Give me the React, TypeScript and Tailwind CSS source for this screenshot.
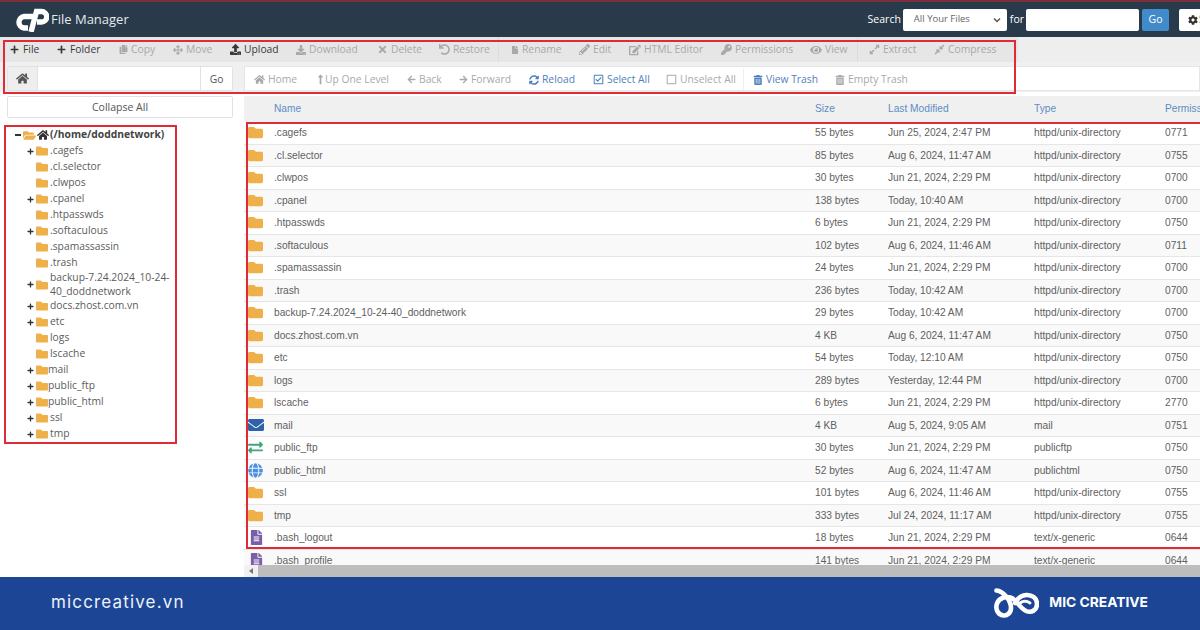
import type { ReactNode } from "react";
import {
  FaArrowLeft,
  FaArrowRight,
  FaArrowsAlt,
  FaCog,
  FaCompressAlt,
  FaCopy,
  FaDownload,
  FaEdit,
  FaEnvelope,
  FaExchangeAlt,
  FaExpandAlt,
  FaEye,
  FaFile,
  FaFileAlt,
  FaFolder,
  FaFolderOpen,
  FaGlobe,
  FaHome,
  FaKey,
  FaLongArrowAltUp,
  FaPencilAlt,
  FaPlus,
  FaRegCheckSquare,
  FaRegSquare,
  FaSyncAlt,
  FaTimes,
  FaTrashAlt,
  FaUndo,
  FaUpload,
} from "react-icons/fa";

type Row = { name: string; size: string; date: string; type: string; perm: string; icon?: "mail" | "ftp" | "www" | "file" };

const rows: Row[] = [
  { name: ".cagefs", size: "55 bytes", date: "Jun 25, 2024, 2:47 PM", type: "httpd/unix-directory", perm: "0771" },
  { name: ".cl.selector", size: "85 bytes", date: "Aug 6, 2024, 11:47 AM", type: "httpd/unix-directory", perm: "0755" },
  { name: ".clwpos", size: "30 bytes", date: "Jun 21, 2024, 2:29 PM", type: "httpd/unix-directory", perm: "0700" },
  { name: ".cpanel", size: "138 bytes", date: "Today, 10:40 AM", type: "httpd/unix-directory", perm: "0700" },
  { name: ".htpasswds", size: "6 bytes", date: "Jun 21, 2024, 2:29 PM", type: "httpd/unix-directory", perm: "0750" },
  { name: ".softaculous", size: "102 bytes", date: "Aug 6, 2024, 11:46 AM", type: "httpd/unix-directory", perm: "0711" },
  { name: ".spamassassin", size: "24 bytes", date: "Jun 21, 2024, 2:29 PM", type: "httpd/unix-directory", perm: "0700" },
  { name: ".trash", size: "236 bytes", date: "Today, 10:42 AM", type: "httpd/unix-directory", perm: "0700" },
  { name: "backup-7.24.2024_10-24-40_doddnetwork", size: "29 bytes", date: "Today, 10:42 AM", type: "httpd/unix-directory", perm: "0700" },
  { name: "docs.zhost.com.vn", size: "4 KB", date: "Aug 6, 2024, 11:47 AM", type: "httpd/unix-directory", perm: "0750" },
  { name: "etc", size: "54 bytes", date: "Today, 12:10 AM", type: "httpd/unix-directory", perm: "0750" },
  { name: "logs", size: "289 bytes", date: "Yesterday, 12:44 PM", type: "httpd/unix-directory", perm: "0700" },
  { name: "lscache", size: "6 bytes", date: "Jun 21, 2024, 2:29 PM", type: "httpd/unix-directory", perm: "2770" },
  { name: "mail", size: "4 KB", date: "Aug 5, 2024, 9:05 AM", type: "mail", perm: "0751", icon: "mail" },
  { name: "public_ftp", size: "30 bytes", date: "Jun 21, 2024, 2:29 PM", type: "publicftp", perm: "0750", icon: "ftp" },
  { name: "public_html", size: "52 bytes", date: "Aug 6, 2024, 11:47 AM", type: "publichtml", perm: "0750", icon: "www" },
  { name: "ssl", size: "101 bytes", date: "Aug 6, 2024, 11:46 AM", type: "httpd/unix-directory", perm: "0755" },
  { name: "tmp", size: "333 bytes", date: "Jul 24, 2024, 11:17 AM", type: "httpd/unix-directory", perm: "0755" },
  { name: ".bash_logout", size: "18 bytes", date: "Jun 21, 2024, 2:29 PM", type: "text/x-generic", perm: "0644", icon: "file" },
  { name: ".bash_profile", size: "141 bytes", date: "Jun 21, 2024, 2:29 PM", type: "text/x-generic", perm: "0644", icon: "file" },
];

const tree = [
  { name: ".cagefs", more: true },
  { name: ".cl.selector" },
  { name: ".clwpos" },
  { name: ".cpanel", more: true },
  { name: ".htpasswds" },
  { name: ".softaculous", more: true },
  { name: ".spamassassin" },
  { name: ".trash" },
  { name: "backup-7.24.2024_10-24-40_doddnetwork", more: true },
  { name: "docs.zhost.com.vn", more: true },
  { name: "etc", more: true },
  { name: "logs" },
  { name: "lscache" },
  { name: "mail", more: true, tight: true },
  { name: "public_ftp", more: true, tight: true },
  { name: "public_html", more: true, tight: true },
  { name: "ssl", more: true },
  { name: "tmp", more: true },
];

function Tool({ icon, label, dark, blue, w }: { icon: ReactNode; label: string; dark?: boolean; blue?: boolean; w: string }) {
  const tone = dark ? "text-[#3a3a3a]" : blue ? "text-[#4f80bd]" : "text-[#a9a9a9]";
  return (
    <span className={`flex shrink-0 items-center gap-[3px] whitespace-nowrap ${tone} ${w}`}>
      {icon}
      {label}
    </span>
  );
}

function RowIcon({ kind }: { kind?: Row["icon"] }) {
  if (kind === "mail") return <FaEnvelope size={16} className="text-[#2f62ad]" />;
  if (kind === "ftp") return <FaExchangeAlt size={15} className="text-[#3fa877]" />;
  if (kind === "www") return <FaGlobe size={15} className="text-[#4a90e2]" />;
  if (kind === "file") return <FaFileAlt size={15} className="ml-[1px] text-[#7a5ea8]" />;
  return <FaFolder size={15} className="text-[#eeb04a]" />;
}

function CpanelLogo() {
  return (
    <svg width="34" height="25" viewBox="0 0 34 25" fill="none" stroke="#ffffff" strokeWidth="5.4">
      <path d="M18 9.5H9A5.8 5.8 0 0 0 9 21H13" />
      <path d="M16 25L21.5 4.5H26.5A5.2 5.2 0 0 1 26.5 15H22" />
    </svg>
  );
}

function MicLogo() {
  return (
    <svg width="46" height="30" viewBox="0 0 46 30" fill="none" stroke="#ffffff" strokeWidth="4.6" strokeLinecap="round">
      <path d="M3.5 2.5C10 3 18 12 18 20C18 25 14 28 10.5 27.5C5 27 2 21 4 15.5C6 10 13 7.5 19 10C24 13 27 20 33 23C39 25.5 44 21.5 44 16C44 10 39 6.5 33 7C28 7.5 24 11 22 15" />
      <path d="M27 15C30 13 34 13 37 15" strokeWidth="3" />
    </svg>
  );
}

export default function App() {
  return (
    <div className="relative flex h-[630px] w-[1200px] flex-col overflow-hidden bg-white font-['Open_Sans',sans-serif] text-[10.3px] text-[#555555]">
      <header className="flex h-[37px] shrink-0 items-center border-t-2 border-[#7a2f3a] bg-[#293a4a] pl-[15px] text-white">
        <CpanelLogo />
        <span className="ml-[2px] text-[13px] text-[#e6e9ec]">File Manager</span>
        <div className="ml-auto flex items-center text-[10.5px]">
          <span>Search</span>
          <span className="ml-[2px] flex h-[22px] w-[104px] items-center justify-between rounded-[2px] bg-white pl-[11px] pr-[6px] text-[9.5px] text-[#666666]">
            All Your Files
            <svg width="8" height="6" viewBox="0 0 8 6" fill="none" stroke="#555555" strokeWidth="1.5">
              <path d="M1 1.5L4 4.5L7 1.5" />
            </svg>
          </span>
          <span className="ml-[3px]">for</span>
          <span className="ml-[2px] h-[22px] w-[113px] rounded-[2px] bg-white" />
          <span className="ml-[3px] flex h-[22px] w-[27px] items-center justify-center rounded-[2px] bg-[#428bca] text-[10.5px]">Go</span>
          <span className="ml-[10px] flex h-[22px] w-[21px] items-center gap-[1px] overflow-hidden rounded-l-[2px] bg-white pl-[9px] text-[#333333]">
            <FaCog size={10} className="shrink-0" />S
          </span>
        </div>
      </header>

      <div className="flex h-[25px] shrink-0 items-center bg-[#eeeeee]">
        <div className="flex h-full w-[498px] items-center bg-[#e6e6e6] pl-[10px]">
          <Tool dark w="w-[47px]" icon={<FaPlus size={9} className="mr-[1px]" />} label="File" />
          <Tool dark w="w-[62px]" icon={<FaPlus size={9} className="mr-[1px]" />} label="Folder" />
          <Tool w="w-[54px]" icon={<FaCopy size={9} />} label="Copy" />
          <Tool w="w-[57px]" icon={<FaArrowsAlt size={10} />} label="Move" />
          <Tool dark w="w-[66px]" icon={<FaUpload size={11} />} label="Upload" />
          <Tool w="w-[81px]" icon={<FaDownload size={10} />} label="Download" />
          <Tool w="w-[62px]" icon={<FaTimes size={11} />} label="Delete" />
          <Tool w="w-[58px]" icon={<FaUndo size={11} />} label="Restore" />
        </div>
        <div className="flex h-full w-[359px] items-center border-l border-[#dcdcdc] bg-[#e6e6e6] pl-[12px]">
          <Tool w="w-[68px]" icon={<FaFile size={8} />} label="Rename" />
          <Tool w="w-[50px]" icon={<FaPencilAlt size={11} />} label="Edit" />
          <Tool w="w-[92px]" icon={<FaEdit size={12} />} label="HTML Editor" />
          <Tool w="w-[89px]" icon={<FaKey size={11} />} label="Permissions" />
          <Tool w="w-[47px]" icon={<FaEye size={12} />} label="View" />
        </div>
        <div className="flex h-full w-[161px] items-center border-l border-[#dcdcdc] bg-[#e6e6e6] pl-[11px]">
          <Tool w="w-[65px]" icon={<FaExpandAlt size={11} />} label="Extract" />
          <Tool w="w-[70px]" icon={<FaCompressAlt size={11} />} label="Compress" />
        </div>
      </div>

      <div className="flex h-[30px] shrink-0 items-end bg-[#f0f0f0] pb-[1px]">
        <div className="ml-[7px] flex h-[25px] w-[226px] items-center rounded-[2px] border border-[#e2e2e2] bg-white">
          <span className="flex h-full w-[30px] items-center justify-center border-r border-[#e2e2e2] bg-[#eeeeee] text-[#555555]">
            <FaHome size={13} />
          </span>
          <span className="ml-auto flex h-full w-[32px] items-center justify-center border-l border-[#e2e2e2] pt-[2px]">Go</span>
        </div>
        <div className="ml-[11px] flex h-[25px] flex-1 items-center border border-[#e6e6e6] bg-white pl-[9px] pt-[2px]">
          <Tool w="w-[62px]" icon={<FaHome size={11} />} label="Home" />
          <Tool w="w-[91px]" icon={<FaLongArrowAltUp size={11} className="-ml-[1px] -mr-[4px]" />} label="Up One Level" />
          <Tool w="w-[52px]" icon={<FaArrowLeft size={9} />} label="Back" />
          <Tool w="w-[70px]" icon={<FaArrowRight size={9} />} label="Forward" />
          <Tool blue w="w-[64px]" icon={<FaSyncAlt size={10} />} label="Reload" />
          <Tool blue w="w-[73px]" icon={<FaRegCheckSquare size={11} />} label="Select All" />
          <Tool w="w-[77px]" icon={<FaRegSquare size={11} />} label="Unselect All" />
          <span className="mr-[9px] h-full w-px bg-[#eeeeee]" />
          <Tool blue w="w-[82px]" icon={<FaTrashAlt size={10} />} label="View Trash" />
          <Tool w="w-[80px]" icon={<FaTrashAlt size={10} />} label="Empty Trash" />
        </div>
      </div>

      <div className="flex min-h-0 flex-1 pt-[4px]">
        <aside className="ml-[7px] w-[226px] shrink-0">
          <div className="flex h-[22px] items-center justify-center rounded-[2px] border border-[#e2e2e2] pt-[1px] text-[10.5px]">Collapse All</div>
          <ul className="mt-[9px] leading-[13.5px] text-[#5c5c5c]">
            <li className="flex h-[16px] items-center font-bold text-[#444444]">
              <span className="ml-[8px] h-[1.5px] w-[6px] bg-[#333333]" />
              <FaFolderOpen size={13} className="ml-[2px] text-[#eeb04a]" />
              <FaHome size={12} className="ml-[1px] text-[#333333]" />
              <span className="ml-[1px]">(/home/doddnetwork)</span>
            </li>
            {tree.map((item) => (
              <li key={item.name} className="flex min-h-[16px] items-center">
                <span className="flex w-[28px] shrink-0 justify-end pr-[1px] text-[#333333]">
                  {item.more ? <FaPlus size={7} /> : null}
                </span>
                <FaFolder size={12} className="ml-[1px] shrink-0 text-[#eeb04a]" />
                <span className={`w-[122px] ${item.tight ? "ml-[0px]" : "ml-[2px]"}`}>{item.name}</span>
              </li>
            ))}
          </ul>
        </aside>

        <main className="ml-[11px] flex min-w-0 flex-1 flex-col font-['Liberation_Sans',sans-serif] text-[10.2px] text-[#5f5f5f]">
          <div className="grid h-[26px] shrink-0 grid-cols-[30px_541px_73px_146px_131px_1fr] items-center bg-[#f0f0f0] text-[#5f8cc4]">
            <span />
            <span>Name</span>
            <span>Size</span>
            <span>Last Modified</span>
            <span>Type</span>
            <span>Permissions</span>
          </div>
          <div className="min-h-0 flex-1 overflow-hidden">
            {rows.map((r, i) => (
              <div
                key={r.name}
                className={`grid h-[22.5px] grid-cols-[30px_541px_73px_146px_131px_1fr] items-center border-b border-[#e6e6e6] ${i % 2 ? "bg-[#f9f9f9]" : "bg-white"}`}
              >
                <span className="pl-[4px]">
                  <RowIcon kind={r.icon} />
                </span>
                <span>{r.name}</span>
                <span>{r.size}</span>
                <span>{r.date}</span>
                <span>{r.type}</span>
                <span>{r.perm}</span>
              </div>
            ))}
          </div>
          <div className="flex h-[12px] shrink-0 bg-[#bdbdbd]">
            <span className="flex w-[14px] items-center justify-center bg-[#f1f1f1]">
              <span className="border-y-[3px] border-r-[4px] border-y-transparent border-r-[#777777]" />
            </span>
          </div>
        </main>
      </div>

      <footer className="flex h-[53px] shrink-0 items-center justify-between bg-[#1c4595] pb-[2px] pl-[51px] pr-[52px] text-white">
        <span className="font-['Inter',sans-serif] text-[17px] tracking-[1.15px] text-[#eef2fa]">miccreative.vn</span>
        <div className="flex items-center gap-[10px]">
          <MicLogo />
          <span className="font-['Inter',sans-serif] text-[13.8px] font-bold">MIC CREATIVE</span>
        </div>
      </footer>

      <div className="absolute left-[3px] top-[40px] h-[54px] w-[1013px] border-2 border-[#e02b36]" />
      <div className="absolute left-[4px] top-[125px] h-[319px] w-[173px] border-2 border-[#e02b36]" />
      <div className="absolute left-[246px] top-[122px] h-[427px] w-[960px] border-2 border-[#e02b36]" />
    </div>
  );
}
